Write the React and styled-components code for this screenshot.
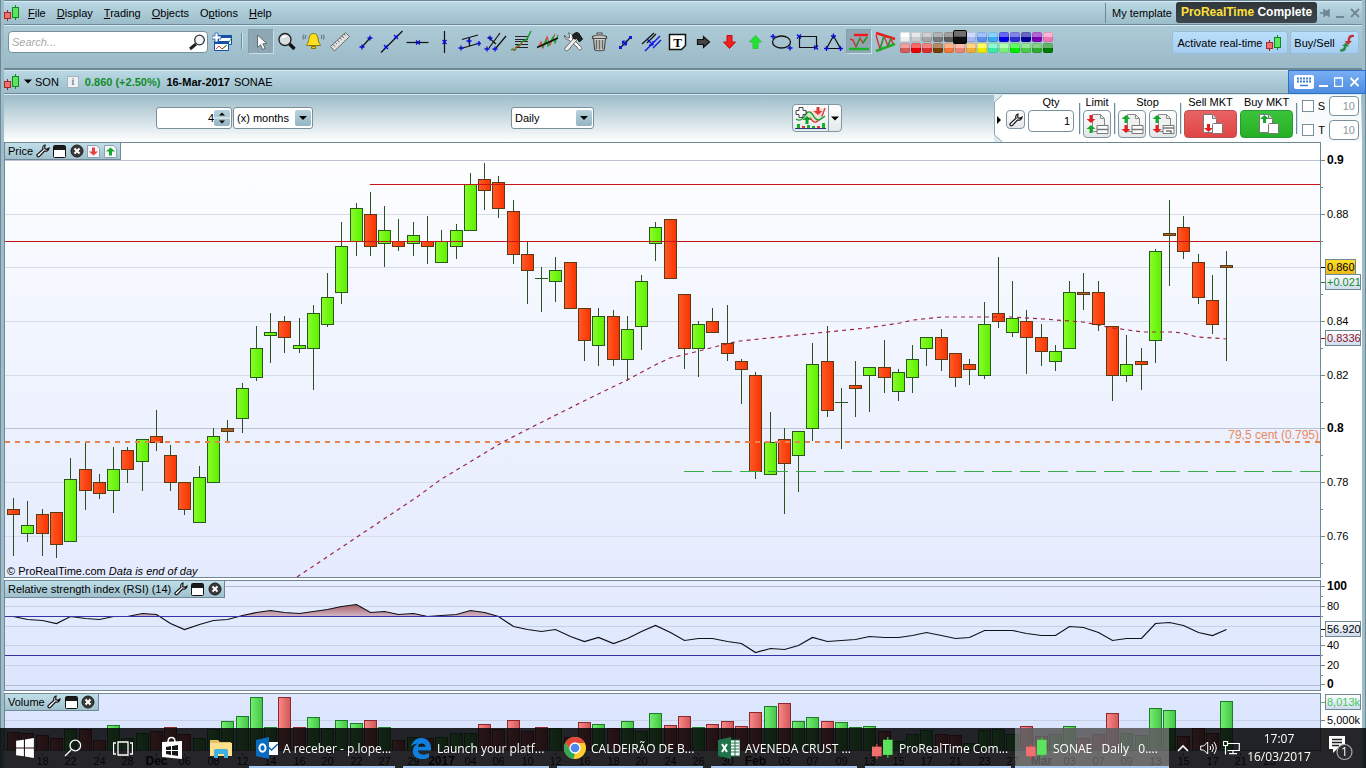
import React, { useState } from "react";
import styled, { createGlobalStyle } from "styled-components";

const GlobalStyle = createGlobalStyle`
  * {
    box-sizing: border-box;
  }
  body {
    margin: 0;
    overflow: hidden;
    font-family: "Liberation Sans", Arial, sans-serif;
    font-size: 11px;
    color: #000;
  }
  button, input, select {
    font: inherit;
    color: inherit;
    margin: 0;
  }
  svg {
    display: block;
    flex: none;
  }
`;

const LINE = "#708894";

/* ---------- window frame ---------- */

const Window = styled.div`
  min-height: 100vh;
  display: flex;
  flex-direction: column;
  padding: 0 3px;
  border: solid ${LINE};
  border-width: 0 1px;
  background: #9dbdca;
`;

const MenuBar = styled.header`
  height: 25px;
  display: flex;
  align-items: center;
  border-top: 1px solid ${LINE};
  border-bottom: 1px solid ${LINE};
  background: linear-gradient(#bbdae6, #9cbcc9);
  box-shadow: inset 0 1px #d3ebf4;
`;

const Menus = styled.nav`
  display: flex;
  gap: 11px;
  padding-left: 8px;
  margin-right: auto;
`;

const MenuItem = styled.a`
  color: #000;
  text-decoration: none;
`;

const Template = styled.a`
  height: 20px;
  line-height: 20px;
  padding: 0 4px 0 6px;
  border-left: 1px solid ${LINE};
  color: #000;
  text-decoration: none;
`;

const Badge = styled.div`
  height: 21px;
  width: 141px;
  line-height: 20px;
  border-radius: 3px;
  background: linear-gradient(#30363a, #3c464c);
  color: #fff;
  font-size: 12px;
  font-weight: bold;
  text-align: center;
  b {
    color: #ffe03c;
  }
`;

const WindowButtons = styled.div`
  display: flex;
  gap: 1px;
  margin-left: 1px;
`;

const BareButton = styled.button`
  width: ${p => p.$w || 14}px;
  height: ${p => p.$h || 20}px;
  padding: 0;
  border: 0;
  background: none;
  display: flex;
  align-items: center;
  justify-content: center;
`;

/* ---------- toolbar ---------- */

const Toolbar = styled.div`
  height: 45px;
  display: flex;
  align-items: flex-start;
  padding: 4px 3px 0 4px;
  border-bottom: 2px solid ${LINE};
  background: linear-gradient(#adcbd7, #9ab9c6);
  box-shadow: inset 0 1px #d3ebf4;
`;

const SearchBox = styled.label`
  width: 200px;
  height: 22px;
  margin-top: 2px;
  display: flex;
  align-items: center;
  border: 1px solid #77909c;
  border-radius: 4px;
  background: #fff;
  input {
    flex: 1;
    min-width: 0;
    border: 0;
    outline: 0;
    padding: 0 3px;
    background: none;
    font-style: italic;
  }
  input::placeholder {
    color: #a8a8a8;
  }
`;

const Divider = styled.i`
  width: 1px;
  height: ${p => p.$h}px;
  margin: ${p => p.$m};
  background: #6f8a98;
  box-shadow: 1px 0 #cfe6ef;
`;

const Tools = styled.div`
  display: flex;
`;

const ToolButton = styled.button`
  width: 26px;
  height: 25px;
  padding: 0;
  display: flex;
  align-items: center;
  justify-content: center;
  border: 1px solid;
  border-color: ${p => (p.$active ? "#85a0ad #c8dde6 #c8dde6 #85a0ad" : "transparent")};
  background: ${p => (p.$active ? "#8fa7b2" : "none")};
`;

const Palette = styled.div`
  display: grid;
  grid-template-columns: repeat(14, 10px);
  gap: 1px;
  padding-top: 3px;
  margin-left: 2px;
`;

const Swatch = styled.button`
  position: relative;
  z-index: ${p => (p.$on ? 1 : 0)};
  height: ${p => (p.$on ? 14 : 10)}px;
  margin: ${p => (p.$on ? "-2px" : 0)};
  padding: 0;
  border: 0;
  border-radius: 2px;
  background: linear-gradient(rgba(255, 255, 255, 0.4) 45%, rgba(0, 0, 0, 0.06) 50%), ${p => p.$color};
  box-shadow: inset 0 0 0 1px ${p => (p.$on ? "#000" : "rgba(0, 0, 0, 0.12)")};
`;

const BlueButton = styled.button`
  height: 23px;
  margin-top: 2px;
  margin-left: ${p => p.$left};
  width: ${p => p.$w}px;
  padding: 0;
  display: flex;
  align-items: center;
  justify-content: center;
  gap: 4px;
  white-space: nowrap;
  border: 1px solid #94bedc;
  border-radius: 3px;
  background: linear-gradient(#b9dffc, #a6cdf0);
`;

/* ---------- instrument title ---------- */

const TitleBar = styled.div`
  height: 24px;
  margin-right: -4px;
  display: flex;
  align-items: center;
  border-bottom: 1px solid ${LINE};
  background: linear-gradient(#bbdae6, #9cbcc9);
  box-shadow: inset 0 1px #d3ebf4;
`;

const Change = styled.b`
  margin: 0 6px;
  color: #128c28;
`;

const Name = styled.span`
  margin-left: 4px;
`;

const InfoBox = styled.button`
  width: 12px;
  height: 12px;
  margin-left: 8px;
  padding: 0;
  border: 1px solid #a6b4ba;
  background: #eef2f4;
  color: #7c8a92;
  font: bold 10px/10px "Liberation Serif", serif;
`;

const PanelButtons = styled.div`
  height: 24px;
  width: 78px;
  margin-left: auto;
  padding-left: 4px;
  display: flex;
  align-items: center;
  border: 1px solid #2f6fc4;
  background: linear-gradient(#78aef4, #4f8de0);
`;

/* ---------- period row ---------- */

const Controls = styled.div`
  height: 48px;
  padding-left: 152px;
  display: flex;
  align-items: center;
  background: linear-gradient(#9bbac7, #fff);
  box-shadow: inset 0 1px #d3ebf4;
`;

const Period = styled.div`
  display: flex;
  gap: 1px;
`;

const Spacer = styled.div`
  flex: 0 1 198px;
`;

const Field = styled.div`
  position: relative;
  flex: none;
  width: ${p => p.$w}px;
  height: 22px;
  border: 1px solid #78909c;
  border-radius: 3px;
  background: #fff;
  input, select {
    width: 100%;
    height: 20px;
    border: 0;
    outline: 0;
    appearance: none;
    background: none;
    padding: 0 3px;
  }
  input {
    text-align: right;
    padding-right: 17px;
  }
`;

const Arrow = styled.span`
  position: absolute;
  right: 1px;
  top: 2px;
  width: 16px;
  height: 16px;
  border-radius: 2px;
  background: linear-gradient(#b9d2dc, #94b5c3);
  pointer-events: none;
`;

const IndicatorButton = styled.div`
  height: 28px;
  display: flex;
  border: 1px solid #8096a2;
  border-radius: 4px;
  background: linear-gradient(#fff, #e4e8ea);
  button + button {
    border-left: 1px solid #8096a2;
  }
`;

const Ticket = styled.section`
  height: 47px;
  margin: 0 1px 0 auto;
  display: flex;
  align-items: center;
  background: linear-gradient(90deg, #fff 60%, #f6f9fa);
`;

const Column = styled.div`
  display: flex;
  flex-direction: column;
  align-items: center;
  gap: 2px;
  height: 44px;
  white-space: nowrap;
  & > div {
    display: flex;
    gap: 3px;
  }
`;

const QtyInput = styled.input`
  width: ${p => p.$w}px;
  height: ${p => p.$h}px;
  padding: 0 3px;
  border: 1px solid #78909c;
  border-radius: 4px;
  background: #fff;
  text-align: right;
  color: ${p => (p.disabled ? "#8a979e" : "#000")};
`;

const OrderButton = styled.button`
  width: ${p => p.$w}px;
  height: ${p => p.$h || 28}px;
  padding: 0;
  display: flex;
  align-items: center;
  justify-content: center;
  border: 1px solid ${p => p.$edge || "#8096a2"};
  border-radius: 4px;
  background: ${p => p.$bg || "linear-gradient(#fff, #e2e6e9)"};
`;

const Checks = styled.div`
  display: grid;
  gap: 4px;
  label {
    display: flex;
    align-items: center;
  }
  input[type="checkbox"] {
    appearance: none;
    width: 12px;
    height: 12px;
    border: 1px solid #78909c;
    background: #fff;
  }
  span {
    width: 15px;
    text-align: center;
  }
`;

/* ---------- chart panels ---------- */

const Charts = styled.main`
  background: #fff;
`;

const Panel = styled.section`
  position: relative;
  display: grid;
  grid-template-columns: minmax(0, 1fr) 41px;
  margin-bottom: 2px;
`;

const Plot = styled.div`
  border: 1px solid ${LINE};
  background: ${p => p.$bg};
  svg {
    width: 100%;
  }
`;

const AxisSvg = styled.svg`
  margin-top: 1px;
  overflow: visible;
  font-size: 11px;
  .major {
    font-size: 12px;
    font-weight: bold;
  }
`;

const DateSvg = styled.svg`
  width: 100%;
  height: 17px;
  overflow: visible;
  font-size: 11px;
  .major {
    font-size: 12px;
    font-weight: bold;
  }
`;

const Tab = styled.div`
  position: absolute;
  left: 1px;
  top: 1px;
  height: 17px;
  padding: 0 2px 0 3px;
  display: flex;
  align-items: center;
  gap: 2px;
  border: solid ${LINE};
  border-width: 0 1px 1px 0;
  background: linear-gradient(#c0dfe9, #9fc0cc);
`;

const LevelLabel = styled.div`
  position: absolute;
  right: 43px;
  top: 286px;
  font-size: 12px;
  color: #e88a60;
`;

const Copyright = styled.div`
  position: absolute;
  left: 3px;
  bottom: 1px;
`;

/* ---------- taskbar ---------- */

const Taskbar = styled.footer`
  position: fixed;
  left: 0;
  right: 0;
  bottom: 0;
  height: 40px;
  display: flex;
  background: rgba(6, 6, 8, 0.87);
  color: #fff;
  font-family: "Open Sans", "Noto Sans", sans-serif;
  font-size: 12px;
`;

const Task = styled.button`
  flex: none;
  width: 154px;
  height: 40px;
  padding: 0 0 0 11px;
  display: flex;
  align-items: center;
  gap: 5px;
  border: 0;
  background: ${p => (p.$active ? "rgba(255, 255, 255, 0.32)" : "none")};
  box-shadow: inset 0 -2px #a8c8f0;
  clip-path: inset(0 ${p => (p.$active ? 0 : "4px")});
  text-align: left;
  white-space: pre;
`;

const Tray = styled.div`
  margin-left: auto;
  display: flex;
  align-items: center;
  padding-right: 13px;
`;

const Clock = styled.time`
  width: 72px;
  margin-right: 12px;
  line-height: 18px;
  text-align: center;
`;

/* ---------- data ---------- */

// one row per session: high, body top, body bottom, low (plot units), kind
const candles = [
  [498, 509, 514, 555, "r"], [501, 525, 533, 541, "g"], [509, 514, 533, 555, "r"],
  [512, 512, 544, 557, "r"], [458, 479, 541, 541, "g"], [442, 469, 490, 509, "r"],
  [474, 482, 493, 498, "r"], [447, 469, 490, 512, "g"], [447, 450, 469, 482, "r"],
  [439, 439, 461, 490, "g"], [410, 436, 442, 450, "r"], [445, 455, 482, 490, "r"],
  [482, 482, 509, 514, "r"], [466, 477, 522, 522, "g"], [428, 436, 482, 482, "g"],
  [420, 428, 431, 440, "b"], [383, 388, 418, 432, "g"], [326, 348, 377, 380, "g"],
  [313, 332, 335, 362, "g"], [316, 321, 337, 352, "r"], [318, 345, 348, 352, "g"],
  [305, 313, 348, 389, "g"], [273, 297, 324, 326, "g"], [222, 246, 292, 303, "g"],
  [203, 208, 241, 255, "g"], [192, 214, 246, 255, "r"], [206, 230, 243, 266, "g"],
  [219, 241, 246, 250, "r"], [222, 235, 243, 255, "g"], [216, 241, 246, 263, "r"],
  [230, 241, 262, 262, "g"], [224, 230, 246, 258, "g"], [173, 184, 230, 230, "g"],
  [163, 179, 190, 209, "r"], [176, 182, 208, 217, "r"], [200, 211, 254, 263, "r"],
  [241, 254, 270, 303, "r"], [267, 278, 278, 311, "g"], [257, 270, 281, 301, "g"],
  [262, 262, 308, 308, "r"], [308, 308, 340, 360, "r"], [308, 316, 345, 365, "g"],
  [310, 316, 359, 365, "r"], [316, 329, 359, 380, "g"], [275, 281, 326, 349, "g"],
  [222, 227, 243, 260, "g"], [219, 219, 278, 278, "r"], [294, 294, 348, 368, "r"],
  [321, 324, 348, 376, "g"], [308, 321, 332, 332, "r"], [305, 343, 353, 360, "r"],
  [359, 361, 369, 403, "r"], [372, 375, 471, 478, "r"], [412, 442, 474, 474, "g"],
  [428, 439, 463, 513, "r"], [431, 431, 455, 491, "g"], [343, 364, 428, 440, "g"],
  [326, 361, 410, 416, "r"], [388, 402, 402, 448, "g"], [361, 385, 388, 416, "r"],
  [367, 367, 375, 411, "g"], [340, 367, 377, 392, "r"], [369, 372, 391, 400, "g"],
  [345, 359, 377, 392, "g"], [337, 337, 348, 365, "g"], [329, 337, 359, 370, "r"],
  [353, 353, 377, 386, "r"], [359, 364, 369, 384, "r"], [302, 324, 375, 378, "g"],
  [257, 313, 321, 327, "r"], [281, 318, 332, 336, "g"], [310, 321, 337, 373, "r"],
  [324, 337, 351, 365, "r"], [345, 351, 361, 370, "g"], [281, 292, 348, 348, "g"],
  [273, 292, 294, 309, "b"], [281, 292, 324, 330, "r"], [326, 326, 375, 400, "r"],
  [335, 364, 375, 381, "g"], [348, 361, 364, 389, "r"], [249, 251, 340, 362, "g"],
  [200, 233, 235, 285, "b"], [216, 227, 251, 258, "r"], [254, 262, 297, 303, "r"],
  [275, 300, 324, 333, "r"], [251, 265, 267, 360, "b"]
];

const rsi = [
  616, 619, 620, 623, 616, 618, 619, 616, 616, 613, 614, 623, 629, 624, 620, 619, 615, 612,
  610, 612, 613, 611, 609, 606, 604, 612, 611, 614, 613, 616, 615, 614, 610, 612, 616, 626,
  629, 631, 629, 636, 641, 637, 643, 638, 631, 625, 632, 640, 638, 638, 641, 643, 652, 648,
  649, 645, 637, 641, 640, 639, 636, 637, 637, 635, 632, 635, 638, 637, 630, 630, 630, 633,
  635, 635, 626, 627, 632, 640, 638, 638, 623, 622, 625, 632, 635, 629
];

const volume =
  "732r 733r 735r 738r 729g 729r 740r 725g 738g 733g 731r 727r 734r 738g 729g 721g 716g 697g " +
  "727g 697r 727r 717g 728g 720g 723g 720r 727g 740r 737g 738r 737g 733g 733g 724r 729r 720r " +
  "731r 727r 728g 737r 722r 724g 728r 721g 731g 713g 725r 716r 727g 724r 721r 726r 712r 706g " +
  "703r 721g 717g 721r 722g 727g 726g 731r 741g 734g 730g 734r 735r 743g 730g 729g 734g 726r " +
  "736r 734g 726g 738r 734r 713r 733g 735g 708g 710g 736r 728r 733r 701g";

const average =
  "297,577 357,537 387,517 417,497 440,480 503,442 540,423 590,398 627,380 657,364 670,358 " +
  "687,354 730,343 740,341 827,332 867,328 900,323 913,320 942,317 1013,317 1043,319 1083,322 " +
  "1113,328 1143,332 1170,332 1183,333 1197,337 1213,338 1227,339";

const dates =
  "18 22 24 28 Dec 06 08 12 14 16 20 22 27 29 2017 04 06 10 12 16 18 20 24 26 30 Feb 03 07 09 " +
  "13 15 17 21 23 27 Mar 03 07 09 13 15 17 21 23";

const colors = [
  "#ffffff", "#d8d8d8", "#b0b0b0", "#808080", "#606060", "#101010", "#b0c4ff",
  "#6496ff", "#40b4ff", "#0000f0", "#3030d8", "#0000a0", "#8000c0", "#ff80c0",
  "#e06464", "#f80000", "#e83030", "#804000", "#ff8040", "#ff8c78", "#ffb840",
  "#fff800", "#40f8b8", "#80ff80", "#00f800", "#50d850", "#30b830", "#008000"
];

const xOf = i => Math.round(13.2 + i * 14.27);

/* ---------- small drawings ---------- */

const Candles = ({ size = 16, dark }) => (
  <svg width={size} height={size} viewBox="0 0 16 16">
    <path d="M3.500 5v11" stroke={dark ? "#e03c3c" : "#a02020"} />
    <path d="M11.500 0v15" stroke={dark ? "#30c030" : "#108820"} />
    <rect x="0.500" y="7.500" width="6" height="6" fill="#f07070" stroke={dark ? "#f07070" : "#a82828"} />
    <rect x="8.500" y="2.500" width="6" height="10" fill="#5ce45c" stroke={dark ? "#5ce45c" : "#108820"} />
  </svg>
);

const Down = ({ w = 9, color = "#000" }) => (
  <svg width={w} height="5" viewBox="0 0 8 4">
    <path d="M0 0h8L4 4z" fill={color} />
  </svg>
);

const Wrench = ({ size = 14 }) => (
  <svg width={size} height={size} viewBox="0 0 14 14">
    <path
      d="M9 1 C7 1.5 6.4 3.4 7 5.2 L1.2 10.6 C.3 11.6 2 13.6 3.2 12.6 L8.6 7 C10.6 7.6 12.6 6.6 13 4.2 L10.8 5.4 L8.8 4.8 L8.8 2.8z"
      fill="#fff"
      stroke="#111"
      strokeWidth="1.200"
    />
  </svg>
);

const Maximize = () => (
  <svg width="13" height="13" viewBox="0 0 13 13">
    <rect x="0.500" y="0.500" width="12" height="12" rx="1" fill="#fff" stroke="#111" />
    <path d="M1 1h11v4H1z" fill="#1a1a1a" />
  </svg>
);

const CloseDot = () => (
  <svg width="14" height="14" viewBox="0 0 14 14">
    <circle cx="7" cy="7" r="6" fill="#3a3a3a" stroke="#1c1c1c" />
    <path d="M4.500 4.500l5 5m0-5l-5 5" stroke="#fff" strokeWidth="2" />
  </svg>
);

const arrowDown = "M-1.5-4h3v4h3L0 4l-4.500-4h3z";
const arrowUp = "M-1.5 4h3V0h3L0-4l-4.500 4h3z";

const MoveTab = ({ up }) => (
  <svg width="13" height="13" viewBox="0 0 13 13">
    <path d="M.5.5h9l3 3v9H.5z" fill="#f4f6fa" stroke="#8f9fb4" />
    <path d={up ? arrowUp : arrowDown} transform="translate(6.5 6.500)" fill={up ? "#14a82c" : "#e84040"} />
  </svg>
);

const PanelTab = ({ title, movable }) => (
  <Tab>
    {title}
    <BareButton aria-label="Settings" $h={16} $w={15}><Wrench /></BareButton>
    <BareButton aria-label="Maximize" $h={16} $w={15}><Maximize /></BareButton>
    <BareButton aria-label="Close" $h={16} $w={15}><CloseDot /></BareButton>
    {movable && <BareButton aria-label="Move down" $h={16} $w={15}><MoveTab /></BareButton>}
    {movable && <BareButton aria-label="Move up" $h={16} $w={15}><MoveTab up /></BareButton>}
  </Tab>
);

// blue anchor marks of the drawing tools
const plus = (x, y) => `M${x - 2.5} ${y}h5M${x} ${y - 2.5}v5`;
const cross = (x, y) => `M${x - 2} ${y - 2}l4 4m0-4l-4 4`;
const Mark = ({ d }) => <path d={d} stroke="#0a0ad8" strokeWidth="1.300" fill="none" />;
const Ink = ({ d, c = "#111", w = 1.2, f = "none" }) => <path d={d} stroke={c} strokeWidth={w} fill={f} />;

const tools = {
  Pointer: <Ink d="M8.500 5v12.500l3-2.800 2.200 4.800 2.400-1.100-2.200-4.700h4z" f="#fff" c="#5c6a72" w="1" />,
  Zoom: (
    <>
      <Ink d="M14.500 14l5 5" w="3.400" />
      <circle cx="10" cy="9.500" r="6" fill="#d8dcde" stroke="#222" strokeWidth="1.400" />
      <path d="M6 9a4.500 4.500 0 0 1 7-3z" fill="#fff" />
    </>
  ),
  Alert: (
    <>
      <Ink d="M12.500 3.500c-4 0-4.500 4-4.800 7-.2 2.500-2.200 3.500-2.200 5h14c0-1.500-2-2.500-2.200-5-.3-3-.8-7-4.800-7z" f="#ffe020" c="#8a7408" w="1" />
      <Ink d="M10.500 16.500h4v2h-4z" f="#f0c808" c="#8a7408" w="1" />
      <Ink d="M5 5c-1 1-1 3-.5 4M2.800 4.500c-1 1.500-1 3.500-.3 5M20 5c1 1 1 3 .5 4M22.200 4.500c1 1.500 1 3.500.3 5" c="#586870" w="1" />
    </>
  ),
  Ruler: (
    <>
      <Ink d="M3.500 16.500L18.500 2.500l4 4L7.500 21z" f="#e0e0e0" c="#686868" w="1" />
      <Ink d="M6 14.500l2 2M8.300 12.300l1.500 1.500M10.500 10.200l2 2M12.800 8l1.500 1.500M15 5.900l2 2M17.200 4l1.500 1.500" c="#585858" w="1" />
    </>
  ),
  Segment: <><Ink d="M9 17L17 8" /><Mark d={plus(9, 17) + plus(17, 8)} /></>,
  Line: <><Ink d="M2 22.500L23.500 1" /><Mark d={cross(7, 17) + cross(17, 7)} /></>,
  Horizontal: <><Ink d="M1.500 12.500h22" /><Mark d={cross(13, 12.5)} /></>,
  Vertical: <><Ink d="M13.500 1v22" /><Mark d={cross(13.5, 12)} /></>,
  Channel: <><Ink d="M5 9.500L21 5M4 18.500L23 13M12.500 8v8" /><Mark d={plus(4, 18) + plus(12, 11) + plus(22, 13.5)} /></>,
  Pitchfork: <><Ink d="M6 18L17 3M13 18L23 6M5 7l8 7" /><Mark d={plus(4, 19) + plus(12, 19) + plus(7, 8)} /></>,
  Fibonacci: (
    <>
      <Ink d="M6 6.500h13M6 9.500h13M6 11.500h13M6 14.500h13M6 17.500h13" c="#222" w="1" />
      <Ink d="M2 20l2-1 2 1 2-4 3-1 3-4 3-1 2-3 3-6" c="#18a030" w="1.500" />
      <Ink d="M4 19l1 2 3-5 2 1 4-6" c="#e04030" w="1" />
    </>
  ),
  Regression: (
    <>
      <Ink d="M4 16l2-4 2 6 4-11 3 8 5-11" c="#d84838" />
      <Ink d="M7 18l4-8 2 6 5-9 2 6 3-8" c="#18a030" />
      <Ink d="M2 17.500L23 8" w="1.400" />
    </>
  ),
  Settings: (
    <>
      <Ink d="M3.500 5l2 3h3V5L7 3c4 0 5 3 4 5l8 8c2 1 2 4 0 4s-2-2-3-3L8 10C5 10 3 8 3.500 5z" f="#fff" c="#666" w="1" />
      <Ink d="M4 18L13 8l2.500 2.500L7 20.500c-2 1-4-1-3-2.500z" f="#ececec" c="#666" w="1" />
      <Ink d="M11.500 5c2-2 4-3 6-2l4 6-3 3-3-4-2.500 1z" f="#222" c="#111" w="1" />
    </>
  ),
  Delete: (
    <>
      <Ink d="M6.500 8.500h12l-1.300 11.500c-2 1-7.400 1-9.400 0z" f="#d0d0cc" c="#4c4c4c" />
      <Ink d="M9.500 10v9M12.500 10v9.500M15.500 10v9" c="#666" w="1.500" />
      <Ink d="M5.500 6.500c3-2 11-2 14 0v2h-14zM10 4.500V3h5v1.500" f="#c4c4c0" c="#4c4c4c" />
    </>
  ),
  Move: (
    <>
      <Ink d="M7 18L18 7" w="1.400" />
      <Ink d="M6 16h3v3H6zM16 6h3v3h-3z" f="#1414e0" w="0" />
      <Ink d="M9.500 11l4 4M9.500 11v3M9.500 11h3M13.500 15v-3M13.500 15h-3" c="#1414e0" />
    </>
  ),
  Parallel: (
    <>
      <Ink d="M3 14L15 3M8 13l9-9" />
      <Ink d="M6 21L21 6M14 18l8-8M8 9l6 6M14 15v-4M14 15h-4" c="#1414e0" w="1.400" />
    </>
  ),
  Text: (
    <>
      <Ink d="M4.500 4.500h16v11l-4 4h-12z" f="#fff" c="#111" w="1.500" />
      <text x="12.500" y="17" textAnchor="middle" fontSize="13" fontWeight="bold" fontFamily="Liberation Serif, serif">T</text>
    </>
  ),
  Right: <Ink d="M6.500 9.500h6V6.500l6 5.500-6 5.500v-3h-6z" f="#444" />,
  Sell: <Ink d="M10 5.500h5V12h3.500l-6 6.500-6-6.500H10z" f="#f42020" c="#c01010" w="1" />,
  Buy: <Ink d="M10 18.500h5V12h3.500l-6-6.500-6 6.500H10z" f="#20e430" c="#30c838" w="1" />,
  Ellipse: <><ellipse cx="12.500" cy="12" rx="9" ry="6" fill="none" stroke="#111" strokeWidth="1.300" /><Mark d={plus(4, 6.5) + plus(21, 18)} /></>,
  Rectangle: <><Ink d="M4.500 6.500h17v11h-17z" /><Mark d={cross(4, 6.5) + cross(21, 17.5)} /></>,
  Triangle: <><Ink d="M12.500 6L19.500 18.500h-14z" /><Mark d={plus(12.5, 6) + plus(5.5, 18.5) + plus(19.5, 18.5)} /></>,
  Ranges: (
    <>
      <Ink d="M7 5h14" c="#f01818" w="2.400" />
      <Ink d="M2 19h20" c="#18b428" w="2.400" />
      <Ink d="M3 9l3 1 3 7 4-9 3 5 4-6" c="#d83030" w="1.400" />
      <Ink d="M9 17l4-9M16 13l4-6" c="#18a030" w="1.400" />
    </>
  ),
  Patterns: (
    <>
      <Ink d="M3 3L22 9" c="#f01818" w="2.400" />
      <Ink d="M3 21l19-7" c="#18b428" w="2.400" />
      <Ink d="M3 5l4 14 4-13 4 10 3-8 2 6" c="#d83030" w="1.400" />
      <Ink d="M7 19l4-13M15 16l3-8" c="#18a030" w="1.400" />
    </>
  )
};

const Sheet = ({ top, bottom, kind }) => (
  <svg width="24" height="24" viewBox="0 0 24 24">
    <path d="M7.500 2.500h8l4 4v13h-12z" fill="#f0f0f0" stroke="#8a8a8a" />
    <path d="M15.500 2.500v4h4" fill="none" stroke="#8a8a8a" />
    <path d={top === "up" ? arrowUp : arrowDown} transform="translate(6 7)" fill={top === "up" ? "#16a828" : "#e02020"} />
    <path d={bottom === "up" ? arrowUp : arrowDown} transform="translate(6 17)" fill={bottom === "up" ? "#16a828" : "#e02020"} />
    <path d="M12 13.500h11v8H12z" fill="#fff" stroke="#777" />
    <path d={kind === "trail" ? "M12 16h11M15 19h5v2" : "M12 17.500h11"} stroke="#777" fill="none" strokeWidth="1.500" />
  </svg>
);

const MarketSheet = ({ up }) => (
  <svg width="24" height="24" viewBox="0 0 24 24">
    <path d="M4.500 2.500h9l4 4v14h-13z" fill="#fff" stroke="#777" />
    <path d="M13.500 2.500v4h4" fill="#ddd" stroke="#777" />
    <path d={up ? arrowUp : arrowDown} transform={up ? "translate(9.500 7)" : "translate(9.500 16)"} fill={up ? "#16a828" : "#e02020"} />
    <rect x="13.500" y="11.500" width="10" height="10" rx="1" fill="#fff" stroke="#777" />
  </svg>
);

/* ---------- charts ---------- */

const Axis = ({ top, height, ticks, minor = [], children }) => (
  <AxisSvg width="41" height={height} viewBox={`1321 ${top} 41 ${height}`}>
    {ticks.map(([y, label, major]) => (
      <g key={label}>
        <path d={`M1321 ${y + 0.5}h4`} stroke={LINE} />
        <text x="1327" y={y + 4} className={major ? "major" : undefined}>{label}</text>
      </g>
    ))}
    {minor.map(y => <path key={y} d={`M1321 ${y + 0.5}h2`} stroke={LINE} />)}
    {children}
  </AxisSvg>
);

const Tag = ({ y, w = 36, text, fill = "url(#tag)", color = "#000" }) => (
  <g>
    <path d={`M1321 ${y + 0.5}h4`} stroke={color} />
    <rect x="1325.500" y={y - 7.5} width={w - 1} height="15" fill={fill} stroke="#708894" />
    <text x="1327" y={y + 4} fill={color}>{text}</text>
  </g>
);

const PriceChart = () => (
  <svg height="434" viewBox="5 143 1315 434" preserveAspectRatio="none">
    <defs>
      <linearGradient id="up"><stop stopColor="#8afc2c" /><stop offset="1" stopColor="#5cf000" /></linearGradient>
      <linearGradient id="down"><stop stopColor="#ff5a28" /><stop offset="1" stopColor="#f83400" /></linearGradient>
    </defs>
    {[160, 214, 267, 321, 375, 428, 482, 536].map(y => (
      <path key={y} d={`M5 ${y + 0.5}h1315`} stroke={y === 160 || y === 428 ? "#bcc3d4" : "#d6dbe7"} />
    ))}
    {candles.map(([high, top, bottom, low, kind], i) => {
      const x = xOf(i);
      return (
        <g key={i} stroke={kind === "g" ? "#28581a" : "#5a3a10"} shapeRendering="crispEdges">
          <path d={`M${x + 0.5} ${high}V${low + 1}`} stroke="#2c5020" />
          {top === bottom ? (
            <path d={`M${x - 6} ${top + 0.5}h13`} />
          ) : (
            <rect
              x={x - 5.5}
              y={top + 0.5}
              width="12"
              height={bottom - top}
              fill={{ g: "url(#up)", r: "url(#down)", b: "#a8642c" }[kind]}
            />
          )}
        </g>
      );
    })}
    <path d="M370 184.500H1320" stroke="#c81414" />
    <path d="M5 241.500H1320" stroke="#c01818" />
    <path d="M5 442H1320" stroke="#e88450" strokeWidth="2" strokeDasharray="5 5" />
    <path d="M684 471.500H1320" stroke="#3cac44" strokeDasharray="20 8" />
    <polyline points={average} fill="none" stroke="#9c2440" strokeWidth="1.200" strokeDasharray="4 4" />
  </svg>
);

const RsiChart = () => {
  const points = rsi.map((y, i) => `${xOf(i) + 0.5},${y + 0.5}`).join(" ");
  return (
    <svg height="109" viewBox="5 581 1315 109" preserveAspectRatio="none">
      <defs>
        <clipPath id="overbought"><rect x="5" y="581" width="1315" height="35" /></clipPath>
        <linearGradient id="heat" gradientUnits="userSpaceOnUse" x1="0" x2="0" y1="603" y2="617">
          <stop stopColor="#a05458" />
          <stop offset="1" stopColor="#d4bccb" />
        </linearGradient>
      </defs>
      {[586, 606, 626, 645, 665, 685].map(y => (
        <path key={y} d={`M5 ${y + 0.5}h1315`} stroke={y === 586 || y === 685 ? "#b4bccf" : "#c8d0e4"} />
      ))}
      <polygon points={`13,616 ${points} 1226,616`} fill="url(#heat)" clipPath="url(#overbought)" />
      <polyline points={points} fill="none" stroke="#101018" strokeWidth="1.200" />
      <path d="M5 616.500h1315M5 655.500h1315" stroke="#3434a4" />
    </svg>
  );
};

const VolumeChart = () => (
  <svg height="56" viewBox="5 694 1315 56" preserveAspectRatio="none">
    <defs>
      <linearGradient id="volUp"><stop stopColor="#74f074" /><stop offset="1" stopColor="#44c444" /></linearGradient>
      <linearGradient id="volDown"><stop stopColor="#fc8888" /><stop offset="1" stopColor="#d05858" /></linearGradient>
    </defs>
    <path d="M5 720.500h1315" stroke="#c8d0e4" />
    {volume.split(" ").map((bar, i) => {
      const y = parseInt(bar, 10);
      const up = bar.endsWith("g");
      return (
        <rect
          key={i}
          x={xOf(i) - 5.5}
          y={y + 0.5}
          width="12"
          height={752 - y}
          fill={up ? "url(#volUp)" : "url(#volDown)"}
          stroke={up ? "#1c7c28" : "#8c2830"}
        />
      );
    })}
  </svg>
);

const DateAxis = () => (
  <DateSvg viewBox="4 753 1358 17" preserveAspectRatio="none">
    {dates.split(" ").map((label, i) => (
      <g key={i}>
        <path d={`M${xOf(i * 2 + 2) + 0.5} 753v3`} stroke={LINE} />
        <text
          x={xOf(i * 2 + 2) + 0.5}
          y="765"
          textAnchor="middle"
          className={label.length > 2 ? "major" : undefined}
        >
          {label}
        </text>
      </g>
    ))}
  </DateSvg>
);

/* ---------- sections ---------- */

const menus = [["", "F", "ile"], ["", "D", "isplay"], ["", "T", "rading"], ["", "O", "bjects"], ["O", "p", "tions"], ["", "H", "elp"]];

const Header = () => (
  <MenuBar>
    <Candles />
    <Menus>
      {menus.map(([pre, key, rest]) => (
        <MenuItem key={rest} href="#menu">{pre}<u>{key}</u>{rest}</MenuItem>
      ))}
    </Menus>
    <Template href="#template">My template</Template>
    <Badge><b>ProRealTime</b> Complete</Badge>
    <WindowButtons>
      <BareButton aria-label="Pin">
        <svg width="11" height="10" viewBox="0 0 11 10"><path d="M0 5h4M4 1v8M4 3h5v4H4M9 1v8" stroke="#6f8792" strokeWidth="1.500" fill="#6f8792" /></svg>
      </BareButton>
      <BareButton aria-label="Minimize">
        <svg width="10" height="10" viewBox="0 0 10 10"><path d="M1 9h8" stroke="#6f8792" strokeWidth="2" /></svg>
      </BareButton>
      <BareButton aria-label="Close">
        <svg width="10" height="10" viewBox="0 0 10 10"><path d="M1 1l8 8M9 1L1 9" stroke="#6f8792" strokeWidth="1.800" /></svg>
      </BareButton>
    </WindowButtons>
  </MenuBar>
);

const DrawingBar = () => {
  const [color, setColor] = useState("#101010");
  return (
    <Toolbar>
      <SearchBox>
        <input placeholder="Search..." aria-label="Search" />
        <svg width="18" height="18" viewBox="0 0 18 18">
          <path d="M1 16l6-5" stroke="#222" strokeWidth="3" />
          <circle cx="10.500" cy="7" r="4.800" fill="#f2f4f5" stroke="#333" strokeWidth="1.300" />
        </svg>
      </SearchBox>
      <BareButton aria-label="New window" $w={28} $h={25}>
        <svg width="20" height="20" viewBox="0 0 20 20">
          <path d="M6.500 3.500h13v9h-13z" fill="#fff" stroke="#1450a8" />
          <path d="M6 3h14v3H6z" fill="#1450a8" />
          <path d="M16 11l3-4" stroke="#18a030" />
          <path d="M2.500 9.500h14v9h-14z" fill="#fff" stroke="#1450a8" />
          <path d="M2 9h15v3H2z" fill="#1450a8" />
          <path d="M4 17l3-3 3 3 5-4" stroke="#e03030" fill="none" />
          <path d="M10 17l5-4" stroke="#18a030" />
          <path d="M3 1h3v3h3v3H6v3H3V7H0V4h3z" fill="#fff" stroke="#1450a8" strokeWidth=".7" />
        </svg>
      </BareButton>
      <Divider $h={16} $m="4px 6px 0 5px" />
      <Tools>
        {Object.keys(tools).map(name => (
          <ToolButton key={name} aria-label={name} $active={name === "Pointer" || name === "Ranges"}>
            <svg width="24" height="24" viewBox="0 0 24 24">{tools[name]}</svg>
          </ToolButton>
        ))}
      </Tools>
      <Palette>
        {colors.map(c => (
          <Swatch key={c} aria-label={c} $color={c} $on={c === color} onClick={() => setColor(c)} />
        ))}
      </Palette>
      <BlueButton $w={116} $left="auto">Activate real-time <Candles /></BlueButton>
      <BlueButton $w={69} $left="2px">
        Buy/Sell
        <svg width="16" height="18" viewBox="0 0 16 18">
          <path d="M15 1C9 0 9 4 8.500 7H5.500L9 11l4-4h-2c0-3 1-4 4-4z" fill="#c83038" />
          <path d="M1 17.500c6 1 6-3 6.500-5H10L7 8.500 3 12h2c0 2-1 3-4 3.500z" fill="#2c8c48" />
        </svg>
      </BlueButton>
    </Toolbar>
  );
};

const Instrument = () => (
  <TitleBar>
    <Candles />
    <BareButton aria-label="Choose instrument" $w={15}><Down w={8} /></BareButton>
    <span>SON</span>
    <InfoBox aria-label="Info">i</InfoBox>
    <Change>0.860 (+2.50%)</Change>
    <b>16-Mar-2017</b>
    <Name>SONAE</Name>
    <PanelButtons>
      <BareButton aria-label="Keyboard" $w={22}>
        <svg width="20" height="14" viewBox="0 0 20 14">
          <rect width="20" height="14" rx="2" fill="#fff" />
          <path d="M3 3.500h14M3 6.500h14" stroke="#3c7cd4" strokeWidth="2" strokeDasharray="2 1" />
          <path d="M6 10.500h8" stroke="#3c7cd4" strokeWidth="1.500" />
        </svg>
      </BareButton>
      <BareButton aria-label="Minimize" $w={16}>
        <svg width="9" height="10" viewBox="0 0 9 10"><path d="M0 9h9" stroke="#fff" strokeWidth="2" /></svg>
      </BareButton>
      <BareButton aria-label="Restore" $w={15}>
        <svg width="9" height="10" viewBox="0 0 9 10"><path d="M.5 1v8.500h8V1M0 1h9" stroke="#fff" fill="none" strokeWidth="1.400" /></svg>
      </BareButton>
      <BareButton aria-label="Close" $w={16}>
        <svg width="9" height="10" viewBox="0 0 9 10"><path d="M.5 1l8 8m0-8l-8 8" stroke="#fff" strokeWidth="1.800" /></svg>
      </BareButton>
    </PanelButtons>
  </TitleBar>
);

const OrderTicket = () => (
  <Ticket>
    <svg width="12" height="47" viewBox="0 0 12 47">
      <path d="M0 0H8L.5 7v32L8 47H0z" fill="#dbe8ed" />
      <path d="M8.500 0L.5 7v33l8 7" fill="none" stroke="#90a8b4" />
      <path d="M3 21v8l4-4z" />
    </svg>
    <Column>
      <span>&nbsp;</span>
      <OrderButton $w={19} $h={19} aria-label="Order settings"><Wrench /></OrderButton>
    </Column>
    <Divider $h={0} $m="0 1px" />
    <Column>
      <label htmlFor="qty">Qty</label>
      <QtyInput id="qty" $w={46} $h={22} defaultValue="1" />
    </Column>
    <Divider $h={31} $m="0 3px 0 5px" />
    <Column>
      <span>Limit</span>
      <OrderButton $w={28} aria-label="Limit order"><Sheet top="down" bottom="up" /></OrderButton>
    </Column>
    <Divider $h={31} $m="0 3px 0 3px" />
    <Column>
      <span>Stop</span>
      <div>
        <OrderButton $w={28} aria-label="Stop order"><Sheet top="up" bottom="down" /></OrderButton>
        <OrderButton $w={28} aria-label="Trailing stop"><Sheet top="up" bottom="down" kind="trail" /></OrderButton>
      </div>
    </Column>
    <Divider $h={31} $m="0 3px 0 3px" />
    <Column>
      <span>Sell MKT</span>
      <OrderButton $w={53} $bg="linear-gradient(#e86464, #e04444)" $edge="#b85050" aria-label="Sell at market">
        <MarketSheet />
      </OrderButton>
    </Column>
    <Divider $h={0} $m="0 1px" />
    <Column>
      <span>Buy MKT</span>
      <OrderButton $w={53} $bg="linear-gradient(#3cc43c, #24b024)" $edge="#289838" aria-label="Buy at market">
        <MarketSheet up />
      </OrderButton>
    </Column>
    <Divider $h={31} $m="0 5px 0 3px" />
    <Checks>
      {["S", "T"].map(name => (
        <label key={name}>
          <input type="checkbox" />
          <span>{name}</span>
          <QtyInput $w={30} $h={20} defaultValue="10" disabled aria-label={name + " distance"} />
        </label>
      ))}
    </Checks>
    <Divider $h={0} $m="0 1px 0 0" />
  </Ticket>
);

const PeriodBar = () => (
  <Controls>
    <Period>
      <Field $w={76}>
        <input aria-label="Number of periods" defaultValue="4" />
        <Arrow>
          <svg width="16" height="16" viewBox="0 0 16 16">
            <path d="M0 8h16" stroke="#fff" />
            <path d="M5 5.500h6L8 2.500zM5 10.500h6l-3 3z" />
          </svg>
        </Arrow>
      </Field>
      <Field $w={80}>
        <select aria-label="Period unit"><option>(x) months</option></select>
        <Arrow><svg width="16" height="16" viewBox="0 0 16 16"><path d="M4 6h8l-4 4z" /></svg></Arrow>
      </Field>
    </Period>
    <Spacer />
    <Field $w={83}>
      <select aria-label="Time frame"><option>Daily</option></select>
      <Arrow><svg width="16" height="16" viewBox="0 0 16 16"><path d="M4 6h8l-4 4z" /></svg></Arrow>
    </Field>
    <Spacer />
    <IndicatorButton>
      <BareButton aria-label="Add indicator" $w={35} $h={26}>
        <svg width="31" height="22" viewBox="0 0 31 22">
          <path d="M9 5c4-4 6 12 12 10 4-1 7-7 9-14" fill="#fcd8d8" stroke="#d83838" strokeWidth="1.300" />
          <path d="M1 12c4 3 7 0 10-5 4-5 6 0 9 4s6 1 10-2" fill="#c8f0c8" stroke="#209838" strokeWidth="1.300" />
          <path d={arrowUp} transform="translate(12 13)" fill="#149c28" />
          <path d={arrowDown} transform="translate(23 4)" fill="#e03838" />
          <path d="M2 17h3v4H2zM12 18h3v3h-3zM17 19h3v2h-3zM27 16h3v5h-3z" fill="#18b028" />
          <path d="M7 19h3v2H7zM22 19h3v2h-3z" fill="#e03838" />
          <path d="M0 21.500h31" stroke="#203880" />
          <path d="M4 .5h4v3h3v4H8v3H4v-3H1v-4h3z" fill="#fff" stroke="#444" />
        </svg>
      </BareButton>
      <BareButton aria-label="Indicator list" $w={13} $h={26}><Down w={8} /></BareButton>
    </IndicatorButton>
    <OrderTicket />
  </Controls>
);

const tasks = [
  ["A receber - p.lope...", (
    <g key="o">
      <path d="M9 5h13v13H9z" fill="#fff" /><path d="M10 8l5.500 5L22 7" stroke="#0a66b8" strokeWidth="1.600" fill="none" />
      <path d="M0 3l13-3v22L0 19z" fill="#0a6cc0" />
      <ellipse cx="6.500" cy="11" rx="3" ry="3.800" fill="none" stroke="#fff" strokeWidth="2" />
    </g>
  )],
  ["Launch your platf...", (
    <path
      key="e"
      d="M1 9.500C2.500 3.500 7 1 11.500 1 17.500 1 21 5.500 21 11v2.500H8c.3 4 6 5.500 11 2.800V20.500C12 24 2.500 22 2.800 14 2.900 10.500 5 8 8 6.500 4.500 6.800 2.500 8 1 9.500zM8 9.800h7.500C15.400 5.500 8.500 5.500 8 9.800z"
      fill="#1080e0"
    />
  )],
  ["CALDEIRÃO DE B...", (
    <g key="c">
      <circle cx="11" cy="11" r="11" fill="#fccc30" />
      <path d="M1.500 5.500A11 11 0 0 1 20.700 6H11L6.500 13.500z" fill="#e0483c" />
      <path d="M1.500 5.500L6.300 13.700 11 16l-1.500 6A11 11 0 0 1 1.500 5.500z" fill="#30a858" />
      <circle cx="11" cy="11" r="5" fill="#4c88f0" stroke="#fff" strokeWidth="1.300" />
    </g>
  )],
  ["AVENEDA CRUST ...", (
    <g key="x">
      <path d="M10 3h12v16H10z" fill="#fff" stroke="#20744a" />
      <path d="M12 6h9M12 9h9M12 12h9M12 15h9M17 3v16" stroke="#20744a" />
      <path d="M0 3l13-3v22L0 19z" fill="#20744a" />
      <path d="M4 7l5 8M9 7l-5 8" stroke="#fff" strokeWidth="2" />
    </g>
  )]
];

const iconButtons = [
  ["Start", "M0 3.500l7-1v7H0zM8 2.300l8-1.300v8.500H8zM0 10.500h7v7l-7-1zM8 10.500h8V19l-8-1.300z", "#fff"],
  ["Search", "M1 18l6-6M6 7.500a5.300 5.300 0 1 0 10.600 0a5.300 5.300 0 1 0 -10.600 0"],
  ["Task view", "M5 4h10v13H5zM3 5H.5v11H3M17 5h2.500v11H17"]
];

const WindowsBar = () => (
  <Taskbar>
    {iconButtons.map(([name, d, fill]) => (
      <BareButton key={name} aria-label={name} $w={49} $h={40}>
        <svg width="20" height="20" viewBox={fill ? "0 1 16 18" : "0 0 20 20"}>
          <path d={d} fill={fill || "none"} stroke={fill ? "none" : "#fff"} strokeWidth="1.300" />
        </svg>
      </BareButton>
    ))}
    <BareButton aria-label="Store" $w={49} $h={40}>
      <svg width="22" height="24" viewBox="0 0 22 24">
        <path d="M7 6c0-6 7-6 7 0" fill="none" stroke="#fff" strokeWidth="1.500" />
        <path d="M1 6l20-1v18L1 21z" fill="#fff" />
        <path d="M5 11l5-1v4H5zM11 10l6-1v5h-6zM5 15h5v4l-5-1zM11 15h6v5l-6-1z" fill="#16161a" />
      </svg>
    </BareButton>
    <BareButton aria-label="File Explorer" $w={49} $h={40}>
      <svg width="24" height="20" viewBox="0 0 24 20">
        <path d="M1 2h8l2 2h11v14H1z" fill="#e8c060" />
        <path d="M1 5h22v13H1z" fill="#fce08c" />
        <path d="M5 20v-7q0-2 2-2h10q2 0 2 2v7h-4v-4H9v4z" fill="#40b0e0" />
      </svg>
    </BareButton>
    {tasks.map(([title, icon]) => (
      <Task key={title}>
        <svg width="22" height="22" viewBox="0 0 22 22">{icon}</svg>
        {title}
      </Task>
    ))}
    <Task><Candles size={22} dark />ProRealTime Com...</Task>
    <Task $active><Candles size={22} dark />SONAE   Daily   0....</Task>
    <Tray>
      <BareButton aria-label="Show hidden icons" $w={26}>
        <svg width="12" height="8" viewBox="0 0 12 8"><path d="M1 7l5-5 5 5" fill="none" stroke="#fff" strokeWidth="1.600" /></svg>
      </BareButton>
      <BareButton aria-label="Volume" $w={24}>
        <svg width="17" height="14" viewBox="0 0 17 14">
          <path d="M.7 5h3l4-4v12l-4-4h-3zM10 5q1.200 2 0 4M12 3q3 4 0 8M14 1q4.500 6 0 12" fill="none" stroke="#fff" />
        </svg>
      </BareButton>
      <BareButton aria-label="Network" $w={23}>
        <svg width="17" height="14" viewBox="0 0 17 14">
          <path d="M4 2.500h12.300v7H4.500M10 9.500v3M6 12.700h8M.5.500h4v4h-4zM2.500 4.500v9" fill="none" stroke="#fff" strokeWidth="1.200" />
        </svg>
      </BareButton>
      <Clock>17:07<br />16/03/2017</Clock>
      <BareButton aria-label="Notifications" $w={26} $h={30}>
        <svg width="25" height="26" viewBox="0 0 25 26">
          <path d="M1 1h16v13h-8l-4 4v-4H1z" fill="#fff" />
          <path d="M4 4.500h10M4 7.500h10M4 10.500h7" stroke="#222" strokeWidth="1.300" />
          <circle cx="16.500" cy="17" r="7.500" fill="#2c2c30" stroke="#aaa" strokeWidth="1.200" />
          <text x="16.500" y="21" textAnchor="middle" fill="#fff" fontSize="12">1</text>
        </svg>
      </BareButton>
    </Tray>
  </Taskbar>
);

const App = () => (
  <>
    <GlobalStyle />
    <Window>
      <Header />
      <DrawingBar />
      <Instrument />
      <PeriodBar />
      <Charts>
        <Panel>
          <Plot $bg="linear-gradient(#fff, #f5f8ff 30%, #e5ebfe)"><PriceChart /></Plot>
          <Axis
            top={143}
            height={434}
            ticks={[
              [160, "0.9", true], [214, "0.88"], [321, "0.84"], [375, "0.82"],
              [428, "0.8", true], [482, "0.78"], [536, "0.76"]
            ]}
            minor={[187, 241, 294, 348, 402, 455, 509, 563]}
          >
            <defs>
              <linearGradient id="gold" x2="0" y2="1"><stop stopColor="#fce028" /><stop offset="1" stopColor="#ecb818" /></linearGradient>
              <linearGradient id="tag" x2="0" y2="1"><stop stopColor="#fff" /><stop offset="1" stopColor="#cddbee" /></linearGradient>
            </defs>
            <Tag y={282} text="+0.021" color="#188828" />
            <Tag y={267} w={31} text="0.860" fill="url(#gold)" />
            <Tag y={338} text="0.8336" color="#8c1428" />
          </Axis>
          <PanelTab title="Price" movable />
          <LevelLabel>79,5 cent (0.795)</LevelLabel>
          <Copyright>© ProRealTime.com <em>Data is end of day</em></Copyright>
        </Panel>
        <Panel>
          <Plot $bg="linear-gradient(#e6edff, #dbe5fd)"><RsiChart /></Plot>
          <Axis
            top={581}
            height={109}
            ticks={[[586, "100", true], [606, "80"], [645, "40"], [665, "20"], [684, "0", true]]}
            minor={[596, 616, 636, 655, 675]}
          >
            <Tag y={629} text="56.920" />
          </Axis>
          <PanelTab title="Relative strength index (RSI) (14)" />
        </Panel>
        <Panel>
          <Plot $bg="linear-gradient(#dfe8ff, #d6e1fb)"><VolumeChart /></Plot>
          <Axis top={694} height={56} ticks={[[720, "5,000k"]]}>
            <Tag y={702} text="8,013k" color="#48c858" />
          </Axis>
          <PanelTab title="Volume" />
        </Panel>
        <DateAxis />
      </Charts>
    </Window>
    <WindowsBar />
  </>
);

export default App;
